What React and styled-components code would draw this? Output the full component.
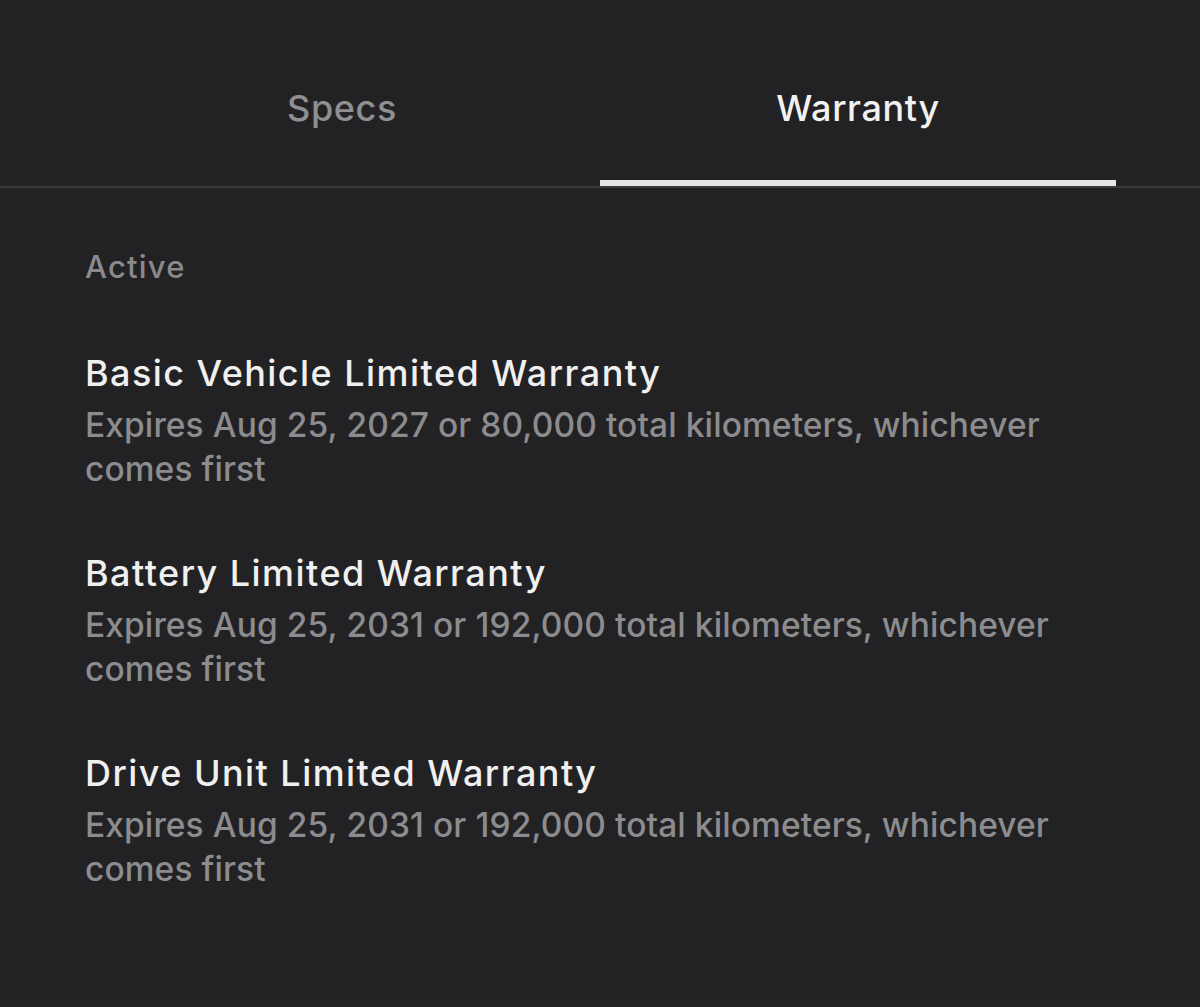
import React from 'react'
import styled, { createGlobalStyle } from 'styled-components'

const GlobalStyle = createGlobalStyle`
  html, body {
    margin: 0;
    padding: 0;
    background: #222224;
  }
  body {
    font-family: Inter, "Noto Sans", sans-serif;
    -webkit-font-smoothing: antialiased;
  }
`

const warranties = [
  { title: 'Basic Vehicle Limited Warranty', detail: 'Expires Aug 25, 2027 or 80,000 total kilometers, whichever comes first' },
  { title: 'Battery Limited Warranty', detail: 'Expires Aug 25, 2031 or 192,000 total kilometers, whichever comes first' },
  { title: 'Drive Unit Limited Warranty', detail: 'Expires Aug 25, 2031 or 192,000 total kilometers, whichever comes first' },
]

function App() {
  return (
    <>
      <GlobalStyle />
      <Page>
        <TabBar>
          <Tab>Specs</Tab>
          <Tab active>Warranty</Tab>
        </TabBar>
        <Content>
          <SectionLabel>Active</SectionLabel>
          <List>
            {warranties.map((w) => (
              <Item key={w.title}>
                <Title>{w.title}</Title>
                <Detail>{w.detail}</Detail>
              </Item>
            ))}
          </List>
        </Content>
      </Page>
    </>
  )
}

export default App

const Page = styled.div`
  width: 1200px;
  height: 1007px;
  background: #222224;
  overflow: hidden;
`

const TabBar = styled.div`
  display: grid;
  grid-template-columns: 1fr 1fr;
  padding: 0 84px;
  border-bottom: 2px solid #3a3a3c;
`

const Tab = styled.div`
  height: 186px;
  box-sizing: border-box;
  padding-top: 90px;
  text-align: center;
  font-size: 36px;
  line-height: 36px;
  font-weight: 500;
  letter-spacing: 0.6px;
  color: ${(p) => (p.active ? '#f2f2f2' : '#8f8f91')};
  border-bottom: 6px solid ${(p) => (p.active ? '#e6e6e6' : 'transparent')};
`

const Content = styled.div`
  padding: 63px 84px 0 85px;
`

const SectionLabel = styled.div`
  font-size: 31px;
  line-height: 31px;
  font-weight: 500;
  letter-spacing: 1.2px;
  color: #8a8a8c;
`

const List = styled.div`
  display: flex;
  flex-direction: column;
  gap: 64px;
  margin-top: 73px;
`

const Item = styled.div`
  display: flex;
  flex-direction: column;
  gap: 12px;
`

const Title = styled.div`
  font-size: 36px;
  line-height: 36px;
  font-weight: 500;
  letter-spacing: 1.45px;
  color: #f0f0f0;
`

const Detail = styled.div`
  font-size: 33.5px;
  line-height: 44px;
  font-weight: 500;
  letter-spacing: 0.1px;
  color: #8c8c8e;
  max-width: 1000px;
`
